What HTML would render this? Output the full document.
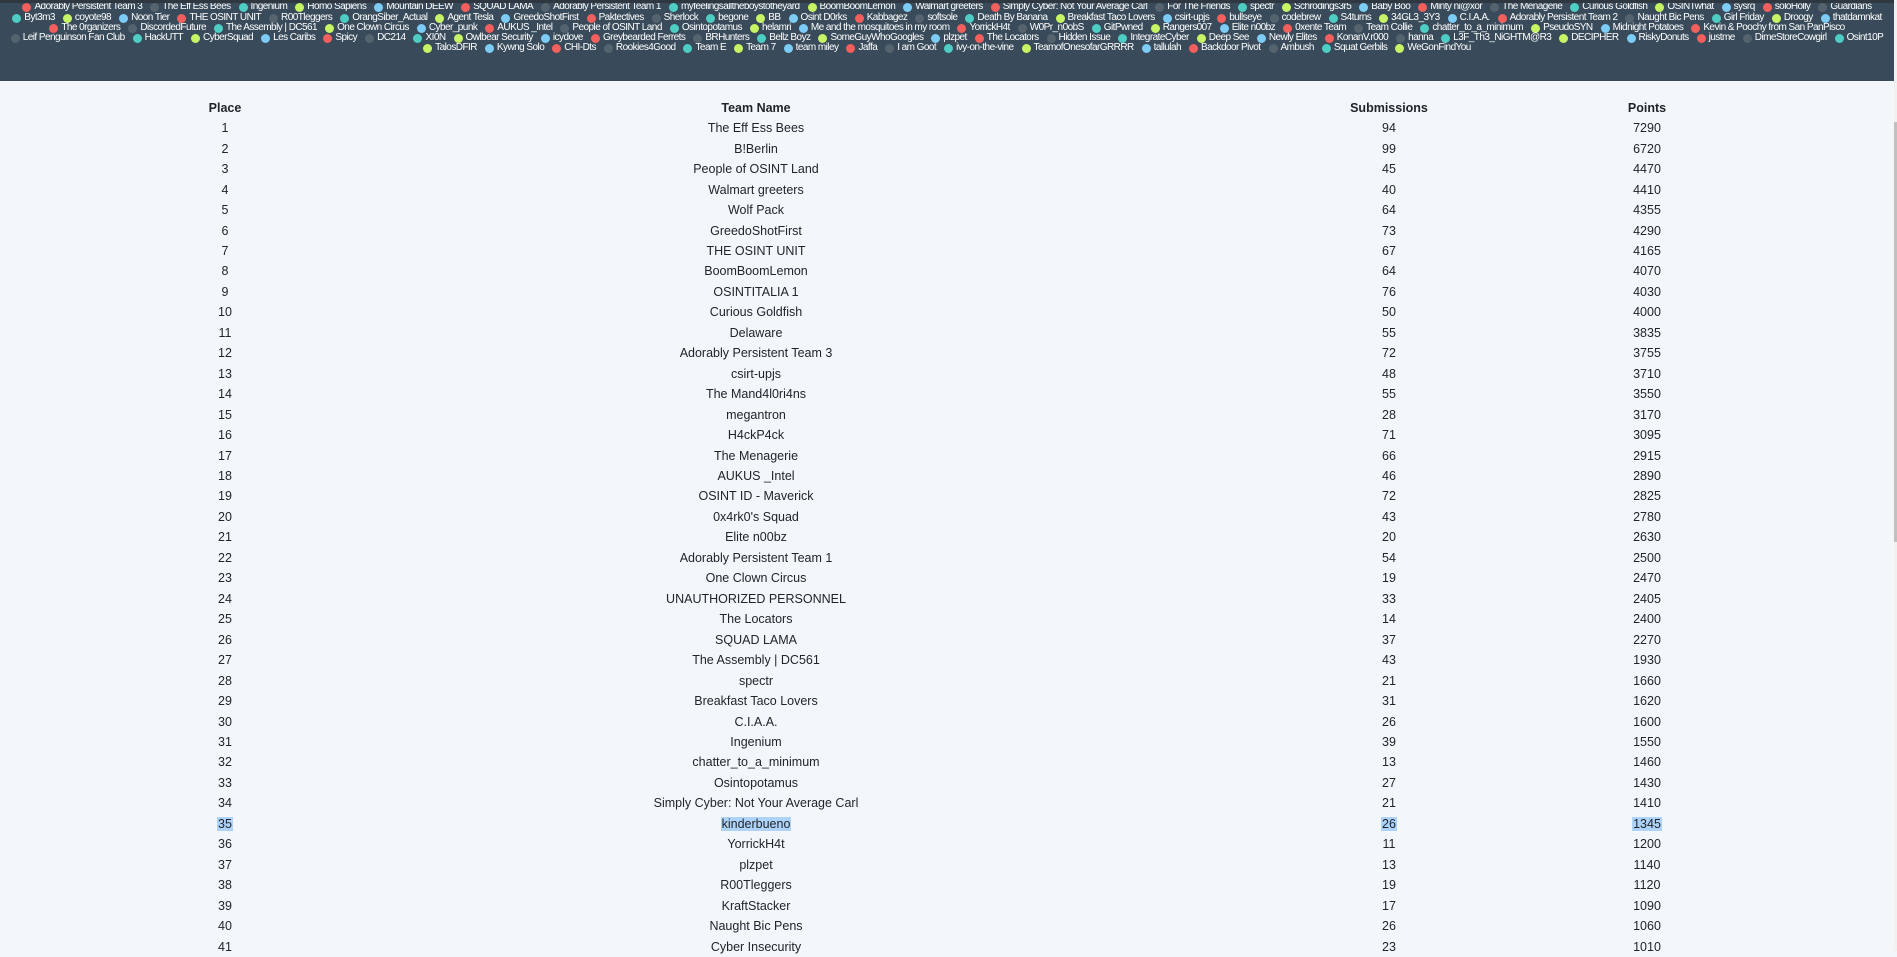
<!DOCTYPE html>
<html><head><meta charset="utf-8">
<style>
*{margin:0;padding:0;box-sizing:border-box}
html,body{width:1897px;height:951px;overflow:hidden;background:#f3f7fa;font-family:"Liberation Sans",Arial,sans-serif;color:#212529}
#hdr{position:absolute;left:0;top:0;width:1894px;height:81px;background:#394b5a;border-top:3px solid #2f3740;overflow:hidden}
.ln{position:absolute;left:0;width:1894px;display:flex;justify-content:center;white-space:nowrap;font-size:10px;letter-spacing:-0.55px;color:#fff;height:10px;line-height:10px}
.ln span{display:inline-flex;align-items:center;margin:0 4px}
.ln i{display:inline-block;width:9px;height:9px;border-radius:50%;margin-right:3px}
.r{background:#f25f5c}.d{background:#55636f}.t{background:#4ecdc4}.l{background:#c7f464}.b{background:#7cccf5}
#sb{position:absolute;left:1894px;top:0;width:3px;height:951px;background:#f1f1f1}
#sb div{position:absolute;top:122px;left:0;width:3px;height:420px;background:#c1c1c1}
.row{position:absolute;left:0;width:1890px;height:20.46px;font-size:12.5px;line-height:20.46px}
.row span{position:absolute;width:400px;text-align:center}
.c1{left:25px}.c2{left:556px}.c3{left:1189px}.c4{left:1447px}
.h{font-weight:bold}
.sel span em{font-style:normal;background:#aed3fb;padding:0 1px}
</style></head><body>
<div id="hdr"></div>
<div id="sb"><div></div></div>
<div id="tbl"></div>
<script>
const lines=[
[-1,0,"Adorably Persistent Team 3~The Eff Ess Bees~Ingenium~Homo Sapiens~Mountain DEEW~SQUAD LAMA~Adorably Persistent Team 1~myfeelingsalltheboystotheyard~BoomBoomLemon~Walmart greeters~Simply Cyber: Not Your Average Carl~For The Friends~spectr~Schrodings3r5~Baby Boo~Minty ni@xor~The Menagerie~Curious Goldfish~OSINTwhat~sysrq~soloHolly~Guardians"],
[10,2,"Byt3m3~coyote98~Noon Tier~THE OSINT UNIT~R00Tleggers~OrangSiber_Actual~Agent Tesla~GreedoShotFirst~Paktectives~Sherlock~begone~BB~Osint D0rks~Kabbagez~softsole~Death By Banana~Breakfast Taco Lovers~csirt-upjs~bullseye~codebrew~S4turns~34GL3_3Y3~C.I.A.A.~Adorably Persistent Team 2~Naught Bic Pens~Girl Friday~Droogy~thatdamnkat"],
[20,0,"The 0rganizers~DiscordedFuture~The Assembly | DC561~One Clown Circus~Cyber_punk~AUKUS _Intel~People of OSINT Land~Osintopotamus~helamri~Me and the mosquitoes in my room~YorrickH4t~W0Pr_n0obS~GitPwned~Rangers007~Elite n00bz~0xente Team~Team Collie~chatter_to_a_minimum~PseudoSYN~Midnight Potatoes~Kevin & Poochy from San PanPisco"],
[30,1,"Leif Penguinson Fan Club~HackUTT~CyberSquad~Les Caribs~Spicy~DC214~XI0N~Owlbear Security~icydove~Greybearded Ferrets~BRHunters~Bellz Boyz~SomeGuyWhoGoogles~plzpet~The Locators~Hidden Issue~IntegrateCyber~Deep See~Newly Elites~KonanV.r000~hanna~L3F_Th3_NiGHTM@R3~DECIPHER~RiskyDonuts~justme~DimeStoreCowgirl~Osint10P"],
[40,3,"TalosDFIR~Kywng Solo~CHI-Dts~Rookies4Good~Team E~Team 7~team miley~Jaffa~I am Goot~ivy-on-the-vine~TeamofOnesofarGRRRR~tallulah~Backdoor Pivot~Ambush~Squat Gerbils~WeGonFindYou"]];
const cols=["r","d","t","l","b"];
let h="";
for(const [y,s,str] of lines){
 h+='<div class="ln" style="top:'+y+'px">';
 str.split("~").forEach((n,i)=>{h+='<span><i class="'+cols[(s+i)%5]+'"></i>'+n.replace(/&/g,"&amp;")+'</span>';});
 h+='</div>';
}
document.getElementById("hdr").innerHTML=h;
const rows=`The Eff Ess Bees~94~7290
B!Berlin~99~6720
People of OSINT Land~45~4470
Walmart greeters~40~4410
Wolf Pack~64~4355
GreedoShotFirst~73~4290
THE OSINT UNIT~67~4165
BoomBoomLemon~64~4070
OSINTITALIA 1~76~4030
Curious Goldfish~50~4000
Delaware~55~3835
Adorably Persistent Team 3~72~3755
csirt-upjs~48~3710
The Mand4l0ri4ns~55~3550
megantron~28~3170
H4ckP4ck~71~3095
The Menagerie~66~2915
AUKUS _Intel~46~2890
OSINT ID - Maverick~72~2825
0x4rk0's Squad~43~2780
Elite n00bz~20~2630
Adorably Persistent Team 1~54~2500
One Clown Circus~19~2470
UNAUTHORIZED PERSONNEL~33~2405
The Locators~14~2400
SQUAD LAMA~37~2270
The Assembly | DC561~43~1930
spectr~21~1660
Breakfast Taco Lovers~31~1620
C.I.A.A.~26~1600
Ingenium~39~1550
chatter_to_a_minimum~13~1460
Osintopotamus~27~1430
Simply Cyber: Not Your Average Carl~21~1410
kinderbueno~26~1345
YorrickH4t~11~1200
plzpet~13~1140
R00Tleggers~19~1120
KraftStacker~17~1090
Naught Bic Pens~26~1060
Cyber Insecurity~23~1010`.split("\n");
let t='<div class="row h" style="top:97.8px"><span class="c1">Place</span><span class="c2">Team Name</span><span class="c3">Submissions</span><span class="c4">Points</span></div>';
rows.forEach((r,i)=>{
 const [n,s,p]=r.split("~");
 const top=118.2+i*20.46;
 const sel=i==34;
 const w=x=>sel?'<em>'+x+'</em>':x;
 t+='<div class="row'+(sel?' sel':'')+'" style="top:'+top+'px"><span class="c1">'+w(i+1)+'</span><span class="c2">'+w(n)+'</span><span class="c3">'+w(s)+'</span><span class="c4">'+w(p)+'</span></div>';
});
document.getElementById("tbl").innerHTML=t;
</script>
</body></html>
